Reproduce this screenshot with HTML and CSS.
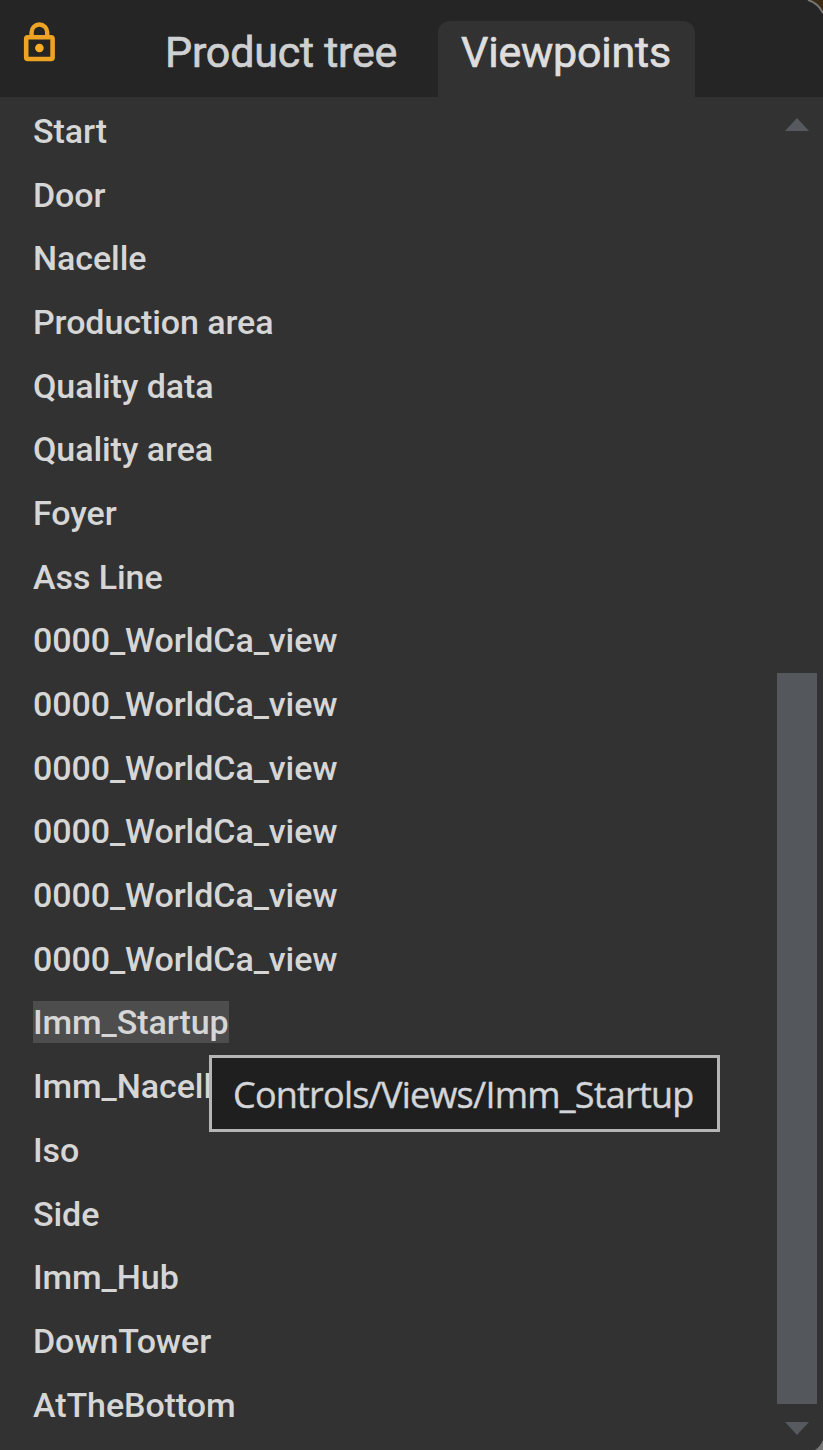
FILE: index.html
```html
<!DOCTYPE html>
<html lang="en">
<head>
<meta charset="utf-8">
<title>Viewpoints</title>
<link rel="stylesheet" href="styles.css">
</head>
<body>
<main class="panel">
  <header class="header">
    <svg class="lock" viewBox="0 0 34 42" fill="none">
      <rect x="4.2" y="16.2" width="26.4" height="21.8" rx="1.5" stroke="#eda323" stroke-width="4.6"/>
      <path d="M9.6 15V11.3a7.8 7.8 0 0 1 15.6 0V15" stroke="#eda323" stroke-width="4.4"/>
      <circle cx="17.4" cy="27" r="4.3" fill="#fbae22"/>
    </svg>
    <nav class="tabs">
      <span class="tab tab-tree"><span>Product tree</span></span>
      <span class="tab tab-active"><span>Viewpoints</span></span>
    </nav>
    <svg class="corner" viewBox="0 0 16 14"><path d="M3 0H16V14Q12 5 3 0Z" fill="#3c2b14"/><path d="M1 0Q11 3 16 13" stroke="#777" stroke-width="2" fill="none"/></svg>
  </header>
  <section class="body">
    <ul class="list">
      <li><span>Start</span></li>
      <li><span>Door</span></li>
      <li><span>Nacelle</span></li>
      <li><span>Production area</span></li>
      <li><span>Quality data</span></li>
      <li><span>Quality area</span></li>
      <li><span>Foyer</span></li>
      <li><span>Ass Line</span></li>
      <li><span>0000_WorldCa_view</span></li>
      <li><span>0000_WorldCa_view</span></li>
      <li><span>0000_WorldCa_view</span></li>
      <li><span>0000_WorldCa_view</span></li>
      <li><span>0000_WorldCa_view</span></li>
      <li><span>0000_WorldCa_view</span></li>
      <li><span class="selected">Imm_Startup</span></li>
      <li><span>Imm_Nacelle</span></li>
      <li><span>Iso</span></li>
      <li><span>Side</span></li>
      <li><span>Imm_Hub</span></li>
      <li><span>DownTower</span></li>
      <li><span>AtTheBottom</span></li>
    </ul>
    <div class="scrollbar">
      <svg class="arrow" viewBox="0 0 24 13"><path d="M0 13L12 0L24 13Z" fill="#565a5f"/></svg>
      <div class="track"><div class="thumb"></div></div>
      <svg class="arrow" viewBox="0 0 24 13"><path d="M0 0L12 13L24 0Z" fill="#565a5f"/></svg>
    </div>
  </section>
  <svg class="corner corner-bottom" viewBox="0 0 8 10"><path d="M0 10Q5 7 8 0V10Z" fill="#777"/></svg>
  <div class="tooltip"><span>Controls/Views/Imm_Startup</span></div>
</main>
</body>
</html>
```
FILE: styles.css
```css
* { box-sizing: border-box; }
body { margin: 0; font-family: Roboto, sans-serif; }
.panel {
  position: relative;
  display: flex;
  flex-direction: column;
  width: 823px;
  height: 1450px;
  background: #323232;
  overflow: hidden;
}
.header {
  display: flex;
  height: 97px;
  flex: none;
  padding-left: 22px;
  background: #252525;
}
.lock { width: 34px; height: 42px; margin-top: 21px; flex: none; }
.tabs { display: flex; align-items: flex-end; margin-left: 86px; }
.tab {
  height: 76px;
  padding: 0 23px;
  font-size: 43px;
  line-height: 62px;
  letter-spacing: -0.22px;
  white-space: nowrap;
  color: #cfd0d2;
  -webkit-text-stroke: 0.7px currentColor;
}
.tab-tree { width: 296px; }
.tab-active {
  width: 257px;
  border-radius: 12px 12px 0 0;
  background: #323232;
  color: #dedede;
}
.corner { position: absolute; top: 0; right: 0; width: 16px; height: 14px; }
.corner-bottom { top: auto; bottom: 0; width: 8px; height: 10px; }
.body { display: flex; flex: 1; justify-content: space-between; }
.list { margin: 0; padding: 2px 0 0 33px; list-style: none; }
.list li {
  display: flex;
  align-items: center;
  height: 63.7px;
  font-size: 34px;
  line-height: 42px;
  font-weight: 500;
  letter-spacing: -0.08px;
  white-space: nowrap;
  color: #d6d6d6;
}
.selected { background: #4d4d4d; }
.scrollbar {
  display: flex;
  flex-direction: column;
  align-items: center;
  width: 40px;
  margin-right: 6px;
  padding: 21px 0 15px;
}
.arrow { width: 24px; height: 13px; flex: none; }
.track { display: flex; align-items: flex-end; flex: 1; width: 40px; padding-bottom: 18px; }
.thumb { width: 40px; height: 731px; background: #54585d; }
.tooltip {
  position: absolute;
  left: 209px;
  top: 1055px;
  width: 511px;
  height: 77px;
  padding-left: 21px;
  border: 3px solid #b5b5b5;
  background: #1f1f1f;
  color: #d3d5d8;
  font: 36px/74px "Open Sans", "Noto Sans", sans-serif;
  letter-spacing: -0.78px;
  -webkit-text-stroke: 0.4px currentColor;
  white-space: nowrap;
}
```
